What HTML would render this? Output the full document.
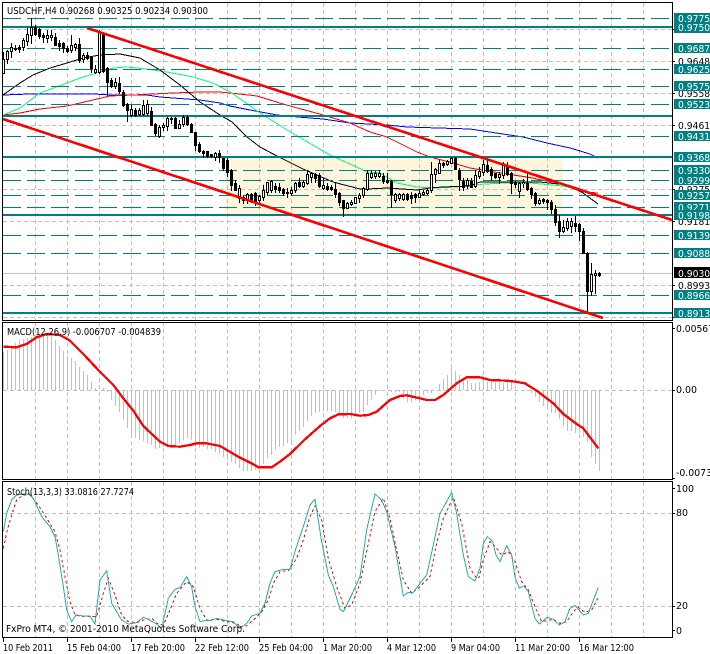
<!DOCTYPE html>
<html><head><meta charset="utf-8"><title>USDCHF,H4</title>
<style>
html,body{margin:0;padding:0;background:#fff;width:710px;height:654px;overflow:hidden}
svg{display:block}
text{font-family:"DejaVu Sans",sans-serif;font-size:10px;fill:#000}
.c{shape-rendering:crispEdges;fill:none}
.t text{fill:#fff}
</style></head><body>
<svg width="710" height="654" viewBox="0 0 710 654" xmlns="http://www.w3.org/2000/svg">
<rect width="710" height="654" fill="#fff"/>
<rect x="225" y="157" width="338" height="57" fill="#fdf5dc" class="c" style="fill:#fdf5dc"/>
<!-- vertical grid -->
<g class="c" stroke="#c0c0c0" stroke-dasharray="4 3">
<path d="M35.5 3V320M67.5 3V320M99.5 3V320M131.5 3V320M163.5 3V320M195.5 3V320M227.5 3V320M259.5 3V320M291.5 3V320M323.5 3V320M355.5 3V320M387.5 3V320M419.5 3V320M451.5 3V320M483.5 3V320M515.5 3V320M547.5 3V320M579.5 3V320M611.5 3V320M643.5 3V320"/>
<path d="M35.5 322V479M67.5 322V479M99.5 322V479M131.5 322V479M163.5 322V479M195.5 322V479M227.5 322V479M259.5 322V479M291.5 322V479M323.5 322V479M355.5 322V479M387.5 322V479M419.5 322V479M451.5 322V479M483.5 322V479M515.5 322V479M547.5 322V479M579.5 322V479M611.5 322V479M643.5 322V479"/>
<path d="M35.5 482V637M67.5 482V637M99.5 482V637M131.5 482V637M163.5 482V637M195.5 482V637M227.5 482V637M259.5 482V637M291.5 482V637M323.5 482V637M355.5 482V637M387.5 482V637M419.5 482V637M451.5 482V637M483.5 482V637M515.5 482V637M547.5 482V637M579.5 482V637M611.5 482V637M643.5 482V637"/>
<!-- horizontal grid -->
<path d="M3 29.5H672M3 61.5H672M3 93.5H672M3 125.5H672M3 189.5H672M3 221.5H672M3 285.5H672M3 317.5H672"/>
<path d="M3 390.5H672M3 513.5H672M3 606.5H672"/>
</g>
<path class="c" stroke="#c0c0c0" d="M3 273.5H672"/>
<!-- moving averages -->
<g class="c" stroke-width="1">
<polyline stroke="#0000ff" points="3,95 30,94 93,94 113,95 147,95 160,97 200,100 220,103 230,106 250,110 277,115 298,117 323,119 350,123 387,125 407,127 470,129 483,131 503,134 523,137 547,143 570,148 590,154 598,158"/>
<polyline stroke="#ff0000" points="3,115 20,113 40,109 67,106 93,100 110,96 133,95 173,93 200,92 220,92 230,93 257,96 283,104 323,115 333,118 350,123 370,132 387,137 417,152 430,157 453,163 470,168 513,175 527,177 557,183 583,192 598,193"/>
<polyline stroke="#00ff7f" points="3,115 20,108 40,93 67,83 80,78 100,72 113,68 127,67 147,69 167,72 193,77 213,83 232,93 260,113 292,133 330,155 363,170 367,172 380,173 397,183 417,187 433,188 457,187 470,185 503,183 530,183 563,186 585,191"/>
<polyline stroke="#000000" points="3,95 20,83 33,75 50,68 67,63 83,58 100,55 120,54 140,58 160,70 180,85 200,102 220,115 232,122 247,137 260,147 277,156 303,169 333,182 360,189 367,189 387,188 417,190 430,188 443,187 470,186 480,182 540,182 567,185 583,193 598,204"/>
</g>
<!-- levels -->
<g class="c" stroke="#008080" stroke-dasharray="18 6">
<path d="M3 18.5H672M3 48.5H672M3 69.5H672M3 86.5H672M3 104.5H672M3 136.5H672M3 170.5H672M3 180.5H672M3 195.5H672M3 207.5H672M3 235.5H672M3 253.5H672M3 295.5H672"/>
</g>
<g class="c" stroke="#008080" stroke-width="2">
<path d="M3 27H672M3 116H672M3 157H672M3 215H672M3 313H672"/>
</g>
<!-- candles -->
<path class="c" stroke="#000" d="M3.5 52V74M7.5 50V64M11.5 43V58M15.5 45V51M19.5 45V53M23.5 38V51M27.5 28V46M31.5 18V44M35.5 25V36M39.5 28V39M43.5 33V43M47.5 30V43M51.5 30V41M55.5 33V46M59.5 40V51M63.5 42V53M67.5 46V53M71.5 35V53M75.5 43V51M79.5 38V63M83.5 53V63M87.5 52V60M91.5 56V73M95.5 65V74M99.5 30V74M103.5 32V73M107.5 67V96M111.5 78V88M115.5 78V89M119.5 77V94M123.5 90V107M127.5 103V122M131.5 105V117M135.5 108V117M139.5 108V116M143.5 100V116M147.5 100V116M151.5 107V126M155.5 123V136M159.5 125V138M163.5 123V131M167.5 117V131M171.5 117V124M175.5 117V129M179.5 120V129M183.5 115V127M187.5 115V126M191.5 123V133M195.5 132V151M199.5 142V153M203.5 150V158M207.5 151V158M211.5 154V158M215.5 152V161M219.5 150V163M223.5 158V171M227.5 158V177M231.5 169V191M235.5 180V191M239.5 185V203M243.5 195V204M247.5 193V204M251.5 193V203M255.5 192V206M259.5 195V203M263.5 185V201M267.5 182V196M271.5 180V193M275.5 183V193M279.5 183V193M283.5 188V196M287.5 188V198M291.5 187V196M295.5 182V193M299.5 178V188M303.5 180V188M307.5 170V185M311.5 172V183M315.5 173V183M319.5 173V188M323.5 178V190M327.5 183V191M331.5 185V191M335.5 182V198M339.5 192V206M343.5 200V217M347.5 202V209M351.5 200V206M355.5 197V204M359.5 193V203M363.5 187V198M367.5 170V191M371.5 170V179M375.5 171V179M379.5 170V178M383.5 173V184M387.5 173V184M391.5 180V208M395.5 193V203M399.5 193V201M403.5 193V201M407.5 193V201M411.5 192V204M415.5 193V203M419.5 190V198M423.5 190V196M427.5 189V195M431.5 162V193M435.5 168V183M439.5 160V174M443.5 162V168M447.5 160V166M451.5 157V164M455.5 157V170M459.5 168V191M463.5 178V191M467.5 178V189M471.5 178V188M475.5 170V188M479.5 167V179M483.5 160V176M487.5 160V173M491.5 167V181M495.5 173V179M499.5 172V184M503.5 162V179M507.5 162V176M511.5 172V194M515.5 181V188M519.5 182V198M523.5 179V188M527.5 174V191M531.5 187V199M535.5 192V206M539.5 198V205M543.5 198V204M547.5 199V210M551.5 200V214M555.5 205V226M559.5 215V238M563.5 220V233M567.5 218V231M571.5 218V233M575.5 216V232M579.5 223V241M583.5 228V254M587.5 252V313M591.5 263V296M595.5 270V294M599.5 272V277"/>
<path class="c" stroke="#000" stroke-width="3" d="M3.5 59V74M7.5 51V60M11.5 47V52M15.5 48V50M19.5 47V50M23.5 40V48M27.5 34V42M31.5 27V36M35.5 27V35M39.5 29V37M43.5 35V38M47.5 35V39M51.5 35V38M55.5 37V46M59.5 43V47M63.5 43V49M67.5 48V52M71.5 45V51M75.5 44V48M79.5 44V61M83.5 55V60M87.5 55V59M91.5 57V69M95.5 69V73M99.5 32V73M103.5 33V72M107.5 68V83M111.5 80V87M115.5 82V87M119.5 83V92M123.5 92V106M127.5 104V111M131.5 109V116M135.5 110V116M139.5 110V115M143.5 105V115M147.5 104V114M151.5 111V126M155.5 124V134M159.5 127V137M163.5 125V128M167.5 118V127M171.5 118V120M175.5 118V129M179.5 124V129M183.5 117V125M187.5 117V125M191.5 124V133M195.5 132V146M199.5 144V152M203.5 151V154M207.5 151V157M211.5 154V157M215.5 153V158M219.5 153V158M223.5 158V169M227.5 160V173M231.5 170V186M235.5 183V191M239.5 188V199M243.5 197V201M247.5 194V200M251.5 194V201M255.5 193V202M259.5 196V201M263.5 190V198M267.5 182V193M271.5 181V191M275.5 186V190M279.5 187V191M283.5 189V194M287.5 192V194M291.5 190V194M295.5 183V191M299.5 182V187M303.5 182V187M307.5 174V184M311.5 173V178M315.5 174V179M319.5 175V187M323.5 185V189M327.5 186V190M331.5 187V190M335.5 189V195M339.5 193V203M343.5 200V209M347.5 203V209M351.5 202V205M355.5 197V204M359.5 195V199M363.5 188V196M367.5 173V190M371.5 173V178M375.5 173V177M379.5 173V177M383.5 176V182M387.5 180V183M391.5 181V195M395.5 194V201M399.5 194V199M403.5 194V200M407.5 194V200M411.5 195V199M415.5 194V198M419.5 193V198M423.5 192V195M427.5 190V194M431.5 174V191M435.5 169V175M439.5 163V174M443.5 163V166M447.5 161V165M451.5 158V164M455.5 158V170M459.5 170V180M463.5 181V188M467.5 180V186M471.5 181V188M475.5 175V187M479.5 171V177M483.5 164V173M487.5 165V172M491.5 169V176M495.5 173V178M499.5 174V178M503.5 165V176M507.5 166V175M511.5 173V184M515.5 182V185M519.5 183V192M523.5 182V184M527.5 183V190M531.5 188V195M535.5 193V204M539.5 200V204M543.5 199V202M547.5 200V203M551.5 202V210M555.5 209V223M559.5 221V232M563.5 227V232M567.5 221V229M571.5 221V227M575.5 223V227M579.5 224V232M583.5 231V254M587.5 253V292M591.5 274V292M595.5 273V276M599.5 273V276"/>
<path class="c" stroke="#fff" d="M3.5 60V73M7.5 52V59M11.5 48V51M23.5 41V47M27.5 35V41M31.5 28V35M47.5 36V38M51.5 36V37M71.5 46V50M75.5 45V47M83.5 56V59M95.5 70V72M99.5 33V72M115.5 83V86M131.5 110V115M139.5 111V114M143.5 106V114M147.5 105V113M159.5 128V136M163.5 126V127M167.5 119V126M179.5 125V128M183.5 118V124M215.5 154V157M239.5 189V198M243.5 198V200M247.5 195V199M259.5 197V200M263.5 191V197M267.5 183V192M271.5 182V190M291.5 191V193M295.5 184V190M303.5 183V186M307.5 175V183M311.5 174V177M323.5 186V188M347.5 204V208M351.5 203V204M355.5 198V203M359.5 196V198M363.5 189V195M367.5 174V189M371.5 174V177M375.5 174V176M379.5 174V176M395.5 195V200M399.5 195V198M403.5 195V199M419.5 194V197M423.5 193V194M427.5 191V193M431.5 175V190M435.5 170V174M439.5 164V173M447.5 162V164M451.5 159V163M467.5 181V185M475.5 176V186M479.5 172V176M483.5 165V172M499.5 175V177M503.5 166V175M519.5 184V191M523.5 183V184M539.5 201V203M563.5 228V231M567.5 222V228M571.5 222V226M591.5 275V291M595.5 274V275"/>
<!-- channel -->
<g class="c" stroke="#ff0000" stroke-width="2.6">
<line x1="87" y1="28" x2="672" y2="220"/>
<line x1="3" y1="119" x2="603" y2="318"/>
</g>
<!-- MACD -->
<path class="c" stroke="#c0c0c0" d="M3.5 390V352M7.5 390V350M11.5 390V345M15.5 390V343M19.5 390V340M23.5 390V339M27.5 390V338M31.5 390V337M35.5 390V335M39.5 390V335M43.5 390V335M47.5 390V334M51.5 390V336M55.5 390V340M59.5 390V346M63.5 390V351M67.5 390V356M71.5 390V358M75.5 390V361M79.5 390V367M83.5 390V371M87.5 390V375M91.5 390V382M95.5 390V388M103.5 390V388M107.5 390V392M111.5 390V400M115.5 390V406M119.5 390V412M123.5 390V420M127.5 390V428M131.5 390V437M135.5 390V438M139.5 390V440M143.5 390V441M147.5 390V443M151.5 390V445M155.5 390V449M159.5 390V448M163.5 390V447M167.5 390V447M171.5 390V448M175.5 390V446M179.5 390V443M183.5 390V440M187.5 390V438M191.5 390V440M195.5 390V447M199.5 390V448M203.5 390V447M207.5 390V449M211.5 390V449M215.5 390V452M219.5 390V454M223.5 390V457M227.5 390V460M231.5 390V462M235.5 390V464M239.5 390V468M243.5 390V471M247.5 390V471M251.5 390V471M255.5 390V470M259.5 390V468M263.5 390V464M267.5 390V458M271.5 390V455M275.5 390V450M279.5 390V447M283.5 390V446M287.5 390V443M291.5 390V442M295.5 390V435M299.5 390V431M303.5 390V427M307.5 390V421M311.5 390V416M315.5 390V413M319.5 390V412M323.5 390V411M327.5 390V411M331.5 390V411M335.5 390V412M339.5 390V413M343.5 390V418M347.5 390V418M351.5 390V419M355.5 390V415M359.5 390V413M363.5 390V412M367.5 390V405M371.5 390V400M375.5 390V395M379.5 390V391M391.5 390V392M395.5 390V392M399.5 390V392M403.5 390V398M407.5 390V402M411.5 390V402M415.5 390V400M419.5 390V398M423.5 390V395M427.5 390V393M431.5 390V393M439.5 390V384M443.5 390V379M447.5 390V375M451.5 390V368M455.5 390V371M459.5 390V375M463.5 390V378M467.5 390V380M471.5 390V383M475.5 390V383M479.5 390V382M483.5 390V381M487.5 390V382M491.5 390V380M495.5 390V382M499.5 390V382M503.5 390V383M507.5 390V382M511.5 390V383M515.5 390V390M527.5 390V391M531.5 390V393M535.5 390V397M539.5 390V402M543.5 390V406M547.5 390V407M551.5 390V413M555.5 390V413M559.5 390V419M563.5 390V426M567.5 390V431M571.5 390V431M575.5 390V433M579.5 390V433M583.5 390V437M587.5 390V442M591.5 390V457M595.5 390V464M599.5 390V471"/>
<g class="c" stroke="#ff0000" stroke-width="7">
<polyline transform="translate(0 320) scale(.33333)" points="10,80 50,82 80,72 110,52 140,42 180,45 210,62 250,102 290,145 340,195 370,235 400,272 430,318 480,365 505,378 540,380 570,375 590,370 620,370 660,378 720,413"/>
<polyline transform="translate(240 320) scale(.33333)" points="0,413 40,433 55,442 95,442 120,425 150,402 195,358 240,318 270,295 295,283 330,282 360,287 385,285 410,275 450,240 480,228 500,226 540,235 560,240 585,240 610,225 650,190 680,172 720,172"/>
<polyline transform="translate(470 320) scale(.33333)" points="30,172 60,180 110,182 135,185 165,190 200,212 250,250 280,282 320,312 340,325 385,385"/>
</g>
<!-- Stochastic -->
<g class="c">
<g transform="translate(0 480) scale(.33333)" stroke-width="3">
<polyline stroke="#ff0000" stroke-dasharray="8 8" points="10,205 22,150 35,105 50,60 70,45 90,45 115,75 140,115 165,155 180,210 195,290 210,365 225,405 250,410 275,410 290,410 310,340 325,295 345,345 365,405 385,425 410,428 430,420 455,415 470,430 490,435 510,390 530,340 560,305 580,320 600,385 620,420 650,418 680,425 710,430 720,440"/>
<polyline stroke="#20b2aa" points="10,155 20,100 35,60 50,45 70,42 90,42 105,65 125,110 150,140 165,170 175,225 190,320 200,390 215,425 228,405 250,408 270,408 285,432 300,300 320,272 335,370 350,395 365,420 385,432 410,428 430,412 445,418 470,432 485,445 505,355 525,328 540,323 560,290 575,320 585,380 600,425 615,422 630,422 650,415 680,422 700,425 720,445"/>
</g>
<g transform="translate(240 480) scale(.33333)" stroke-width="3">
<polyline stroke="#ff0000" stroke-dasharray="8 8" points="0,440 20,438 40,420 65,395 85,360 100,310 120,275 145,272 170,235 190,180 210,110 225,78 245,120 265,235 290,320 315,385 335,375 360,310 385,190 405,95 430,55 450,115 470,210 490,300 515,340 540,320 570,290 590,190 610,115 640,52 665,130 690,265 710,295 720,290"/>
<polyline stroke="#20b2aa" points="0,445 20,430 35,408 60,400 75,370 90,310 105,275 130,268 150,268 168,205 190,140 210,75 225,58 245,185 265,285 280,320 300,388 310,395 335,345 360,290 380,150 405,42 425,60 440,95 465,200 490,348 505,337 520,337 540,310 560,285 580,195 600,100 635,38 650,100 670,225 685,290 705,303 720,265"/>
</g>
<g transform="translate(470 480) scale(.33333)" stroke-width="3">
<polyline stroke="#ff0000" stroke-dasharray="8 8" points="30,280 40,240 60,185 80,205 95,225 115,215 135,245 155,305 175,330 195,380 215,425 250,418 270,430 290,425 310,395 325,382 345,397 365,390 385,352"/>
<polyline stroke="#20b2aa" points="30,265 40,190 52,170 68,185 78,225 90,245 110,197 125,225 135,290 148,325 162,318 175,335 195,415 208,432 232,412 250,418 268,435 285,425 300,385 315,376 340,405 355,400 385,322"/>
</g>
</g>
<!-- frames -->
<g class="c" stroke="#000">
<path d="M2.5 2.5H672.5V320.5H2.5Z"/>
<path d="M2.5 322.5H672.5V479.5H2.5Z"/>
<path d="M2.5 481.5H672.5V637.5H2.5Z"/>
<path d="M673 29.5h2M673 61.5h2M673 93.5h2M673 125.5h2M673 189.5h2M673 221.5h2M673 285.5h2M673 317.5h2M673 328.5h2M673 390.5h2M673 478.5h2M673 488.5h2M673 513.5h2M673 606.5h2M673 630.5h2"/>
<path d="M3.5 638v4M67.5 638v4M131.5 638v4M195.5 638v4M259.5 638v4M323.5 638v4M387.5 638v4M451.5 638v4M515.5 638v4M579.5 638v4"/>
</g>
<!-- chart text -->
<text x="7" y="14" textLength="201" lengthAdjust="spacingAndGlyphs">USDCHF,H4  0.90268 0.90325 0.90234 0.90300</text>
<text x="7" y="335" textLength="154" lengthAdjust="spacingAndGlyphs">MACD(12,26,9) -0.006707 -0.004839</text>
<text x="7" y="495" textLength="127" lengthAdjust="spacingAndGlyphs">Stoch(13,3,3) 33.0816 27.7274</text>
<text x="6" y="632" textLength="239" lengthAdjust="spacingAndGlyphs">FxPro MT4, © 2001-2010 MetaQuotes Software Corp.</text>
<!-- axis labels -->
<g>
<text x="678" y="65" textLength="38" lengthAdjust="spacingAndGlyphs">0.96485</text>
<text x="678" y="97" textLength="38" lengthAdjust="spacingAndGlyphs">0.95580</text>
<text x="678" y="129" textLength="38" lengthAdjust="spacingAndGlyphs">0.94610</text>
<text x="678" y="193" textLength="38" lengthAdjust="spacingAndGlyphs">0.92750</text>
<text x="678" y="225" textLength="38" lengthAdjust="spacingAndGlyphs">0.91810</text>
<text x="678" y="289" textLength="38" lengthAdjust="spacingAndGlyphs">0.89935</text>
<text x="676" y="332" textLength="38" lengthAdjust="spacingAndGlyphs">0.00567</text>
<text x="676" y="393" textLength="21" lengthAdjust="spacingAndGlyphs">0.00</text>
<text x="676" y="476" textLength="42" lengthAdjust="spacingAndGlyphs">-0.00734</text>
<text x="676" y="492" textLength="18" lengthAdjust="spacingAndGlyphs">100</text>
<text x="676" y="516" textLength="12" lengthAdjust="spacingAndGlyphs">80</text>
<text x="676" y="609" textLength="12" lengthAdjust="spacingAndGlyphs">20</text>
<text x="676" y="634" textLength="6" lengthAdjust="spacingAndGlyphs">0</text>
</g>
<!-- teal labels -->
<g class="t">
<rect x="674" y="13" width="36" height="10" fill="#008080"/><text x="678" y="22" textLength="38" lengthAdjust="spacingAndGlyphs">0.97751</text>
<rect x="674" y="23" width="36" height="10" fill="#008080"/><text x="678" y="31" textLength="38" lengthAdjust="spacingAndGlyphs">0.97500</text>
<rect x="674" y="43" width="36" height="10" fill="#008080"/><text x="678" y="52" textLength="38" lengthAdjust="spacingAndGlyphs">0.96872</text>
<rect x="674" y="64" width="36" height="10" fill="#008080"/><text x="678" y="73" textLength="38" lengthAdjust="spacingAndGlyphs">0.96252</text>
<rect x="674" y="81" width="36" height="10" fill="#008080"/><text x="678" y="90" textLength="38" lengthAdjust="spacingAndGlyphs">0.95755</text>
<rect x="674" y="99" width="36" height="10" fill="#008080"/><text x="678" y="108" textLength="38" lengthAdjust="spacingAndGlyphs">0.95237</text>
<rect x="674" y="131" width="36" height="10" fill="#008080"/><text x="678" y="140" textLength="38" lengthAdjust="spacingAndGlyphs">0.94312</text>
<rect x="674" y="152" width="36" height="10" fill="#008080"/><text x="678" y="161" textLength="38" lengthAdjust="spacingAndGlyphs">0.93680</text>
<rect x="674" y="165" width="36" height="10" fill="#008080"/><text x="678" y="174" textLength="38" lengthAdjust="spacingAndGlyphs">0.93300</text>
<rect x="674" y="175" width="36" height="10" fill="#008080"/><text x="678" y="184" textLength="38" lengthAdjust="spacingAndGlyphs">0.92999</text>
<rect x="674" y="190" width="36" height="10" fill="#008080"/><text x="678" y="199" textLength="38" lengthAdjust="spacingAndGlyphs">0.92570</text>
<rect x="674" y="202" width="36" height="10" fill="#008080"/><text x="678" y="211" textLength="38" lengthAdjust="spacingAndGlyphs">0.92719</text>
<rect x="674" y="210" width="36" height="10" fill="#008080"/><text x="678" y="219" textLength="38" lengthAdjust="spacingAndGlyphs">0.91986</text>
<rect x="674" y="230" width="36" height="10" fill="#008080"/><text x="678" y="239" textLength="38" lengthAdjust="spacingAndGlyphs">0.91393</text>
<rect x="674" y="248" width="36" height="10" fill="#008080"/><text x="678" y="257" textLength="38" lengthAdjust="spacingAndGlyphs">0.90886</text>
<rect x="674" y="267" width="36" height="11" fill="#000"/><text x="678" y="277" textLength="38" lengthAdjust="spacingAndGlyphs">0.90300</text>
<rect x="674" y="290" width="36" height="10" fill="#008080"/><text x="678" y="299" textLength="38" lengthAdjust="spacingAndGlyphs">0.89660</text>
<rect x="674" y="308" width="36" height="10" fill="#008080"/><text x="678" y="317" textLength="38" lengthAdjust="spacingAndGlyphs">0.89135</text>
</g>
<!-- time axis -->
<g>
<text x="3" y="651" textLength="50" lengthAdjust="spacingAndGlyphs">10 Feb 2011</text>
<text x="67" y="651" textLength="54" lengthAdjust="spacingAndGlyphs">15 Feb 04:00</text>
<text x="131" y="651" textLength="54" lengthAdjust="spacingAndGlyphs">17 Feb 20:00</text>
<text x="195" y="651" textLength="54" lengthAdjust="spacingAndGlyphs">22 Feb 12:00</text>
<text x="259" y="651" textLength="54" lengthAdjust="spacingAndGlyphs">25 Feb 04:00</text>
<text x="323" y="651" textLength="49" lengthAdjust="spacingAndGlyphs">1 Mar 20:00</text>
<text x="387" y="651" textLength="49" lengthAdjust="spacingAndGlyphs">4 Mar 12:00</text>
<text x="451" y="651" textLength="49" lengthAdjust="spacingAndGlyphs">9 Mar 04:00</text>
<text x="515" y="651" textLength="55" lengthAdjust="spacingAndGlyphs">11 Mar 20:00</text>
<text x="579" y="651" textLength="55" lengthAdjust="spacingAndGlyphs">16 Mar 12:00</text>
</g>
</svg>
</body></html>
